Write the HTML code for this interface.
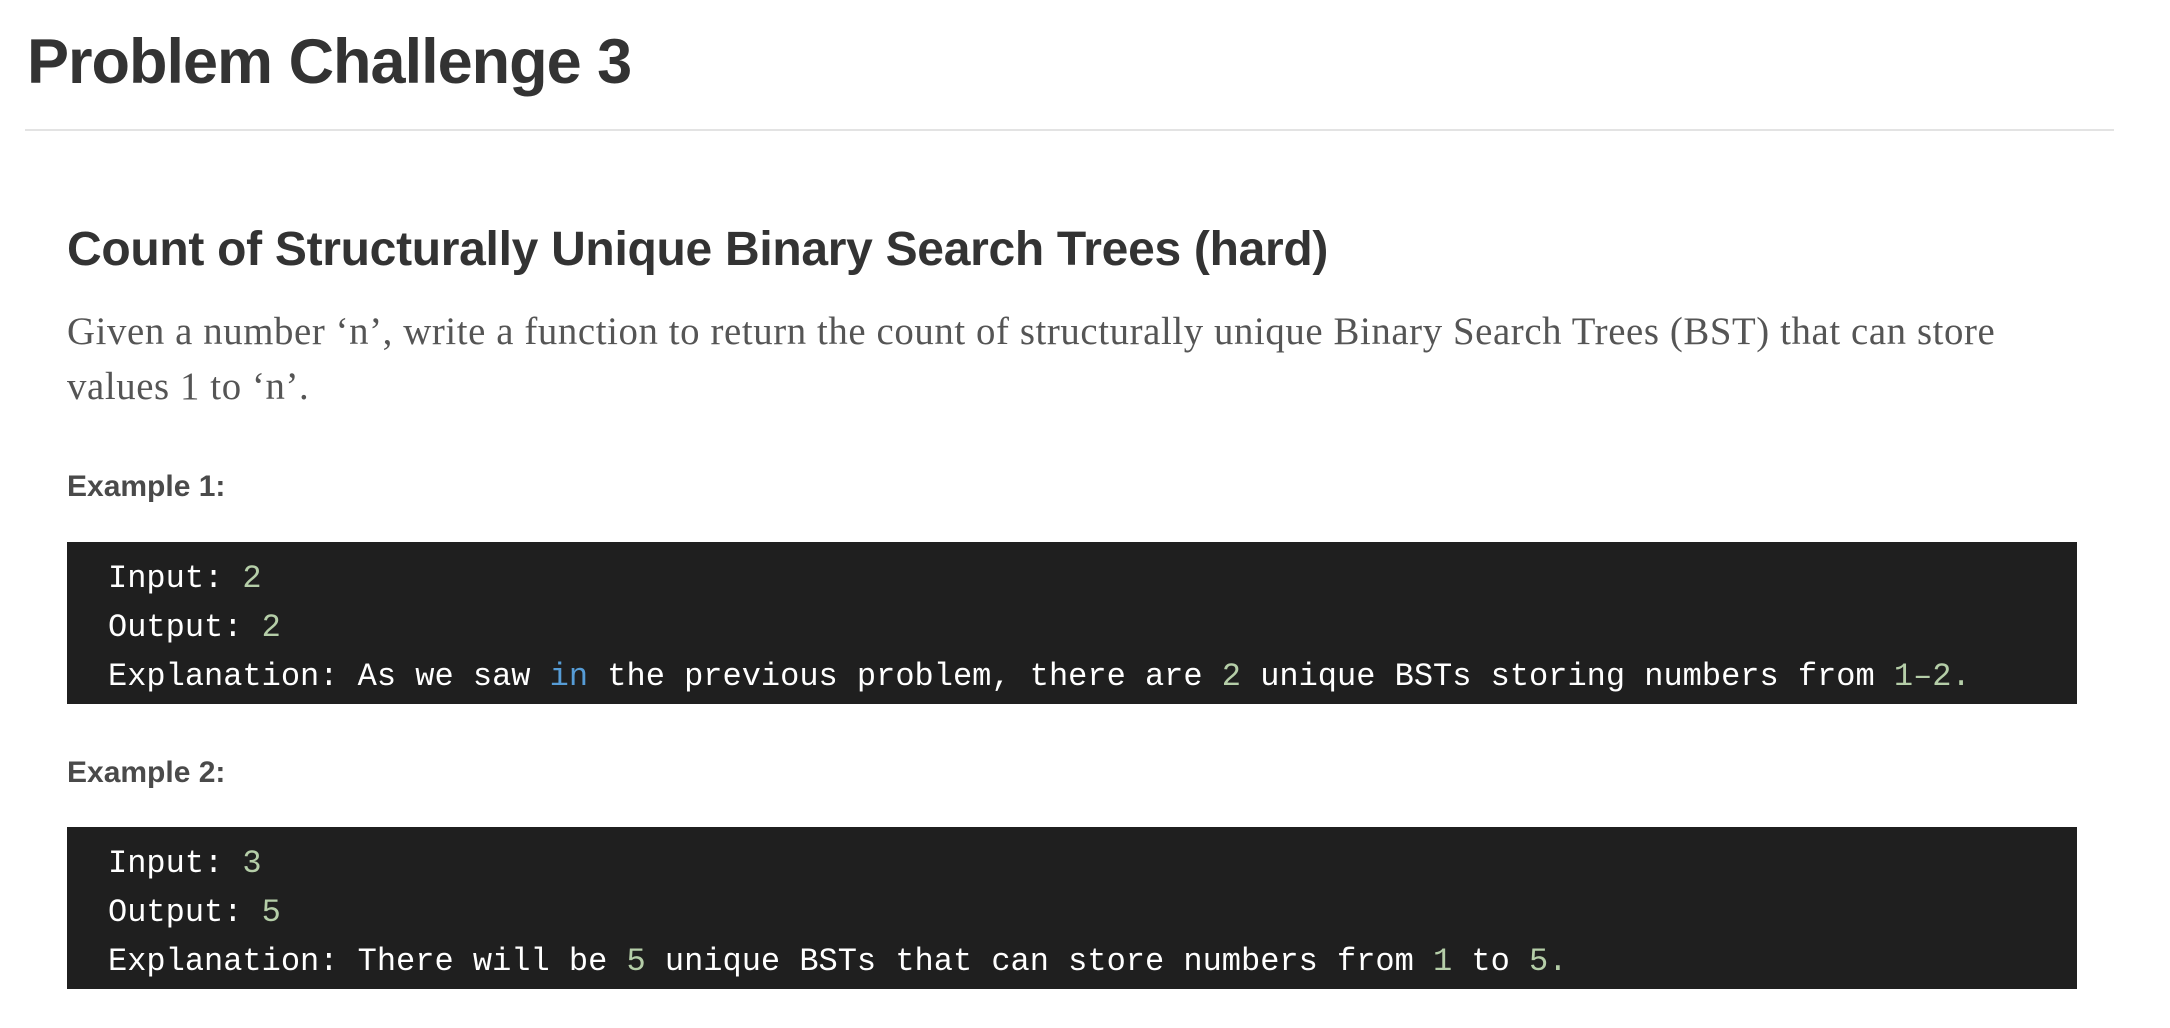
<!DOCTYPE html>
<html><head><meta charset="utf-8"><style>
html,body{margin:0;padding:0;background:#fff;width:2170px;height:1028px;overflow:hidden}
.t{position:absolute;left:27px;top:22px;font:bold 63px/80px "Liberation Sans",sans-serif;color:#333;letter-spacing:-1px}
.hr{position:absolute;left:25px;top:129px;width:2089px;height:2px;background:#e3e3e3}
.h2{position:absolute;left:67px;top:220px;font:bold 48px/60px "Liberation Sans",sans-serif;color:#333;letter-spacing:-0.3px}
.p{position:absolute;left:67px;top:304px;width:2060px;font:38.8px/55px "Liberation Serif",serif;color:#555;letter-spacing:0.6px}
.ex{position:absolute;left:67px;font:bold 30px/40px "Liberation Sans",sans-serif;color:#4a4a4a}
.code{position:absolute;left:67px;width:2010px;height:162px;background:#1f1f1f;box-sizing:border-box;padding:12px 0 0 41px;font:32px/49px "Liberation Mono",monospace;color:#fff;white-space:pre}
.n{color:#b5cea8}.k{color:#569cd6}
</style></head><body>
<div class="t">Problem Challenge 3</div>
<div class="hr"></div>
<div class="h2">Count of Structurally Unique Binary Search Trees (hard)</div>
<div class="p">Given a number ‘n’, write a function to return the count of structurally unique Binary Search Trees (BST) that can store<br>values 1 to ‘n’.</div>
<div class="ex" style="top:467px">Example 1:</div>
<div class="code" style="top:542px">Input: <span class="n">2</span>
Output: <span class="n">2</span>
Explanation: As we saw <span class="k">in</span> the previous problem, there are <span class="n">2</span> unique BSTs storing numbers from <span class="n">1–2.</span></div>
<div class="ex" style="top:753px">Example 2:</div>
<div class="code" style="top:827px">Input: <span class="n">3</span>
Output: <span class="n">5</span>
Explanation: There will be <span class="n">5</span> unique BSTs that can store numbers from <span class="n">1</span> to <span class="n">5.</span></div>
</body></html>
